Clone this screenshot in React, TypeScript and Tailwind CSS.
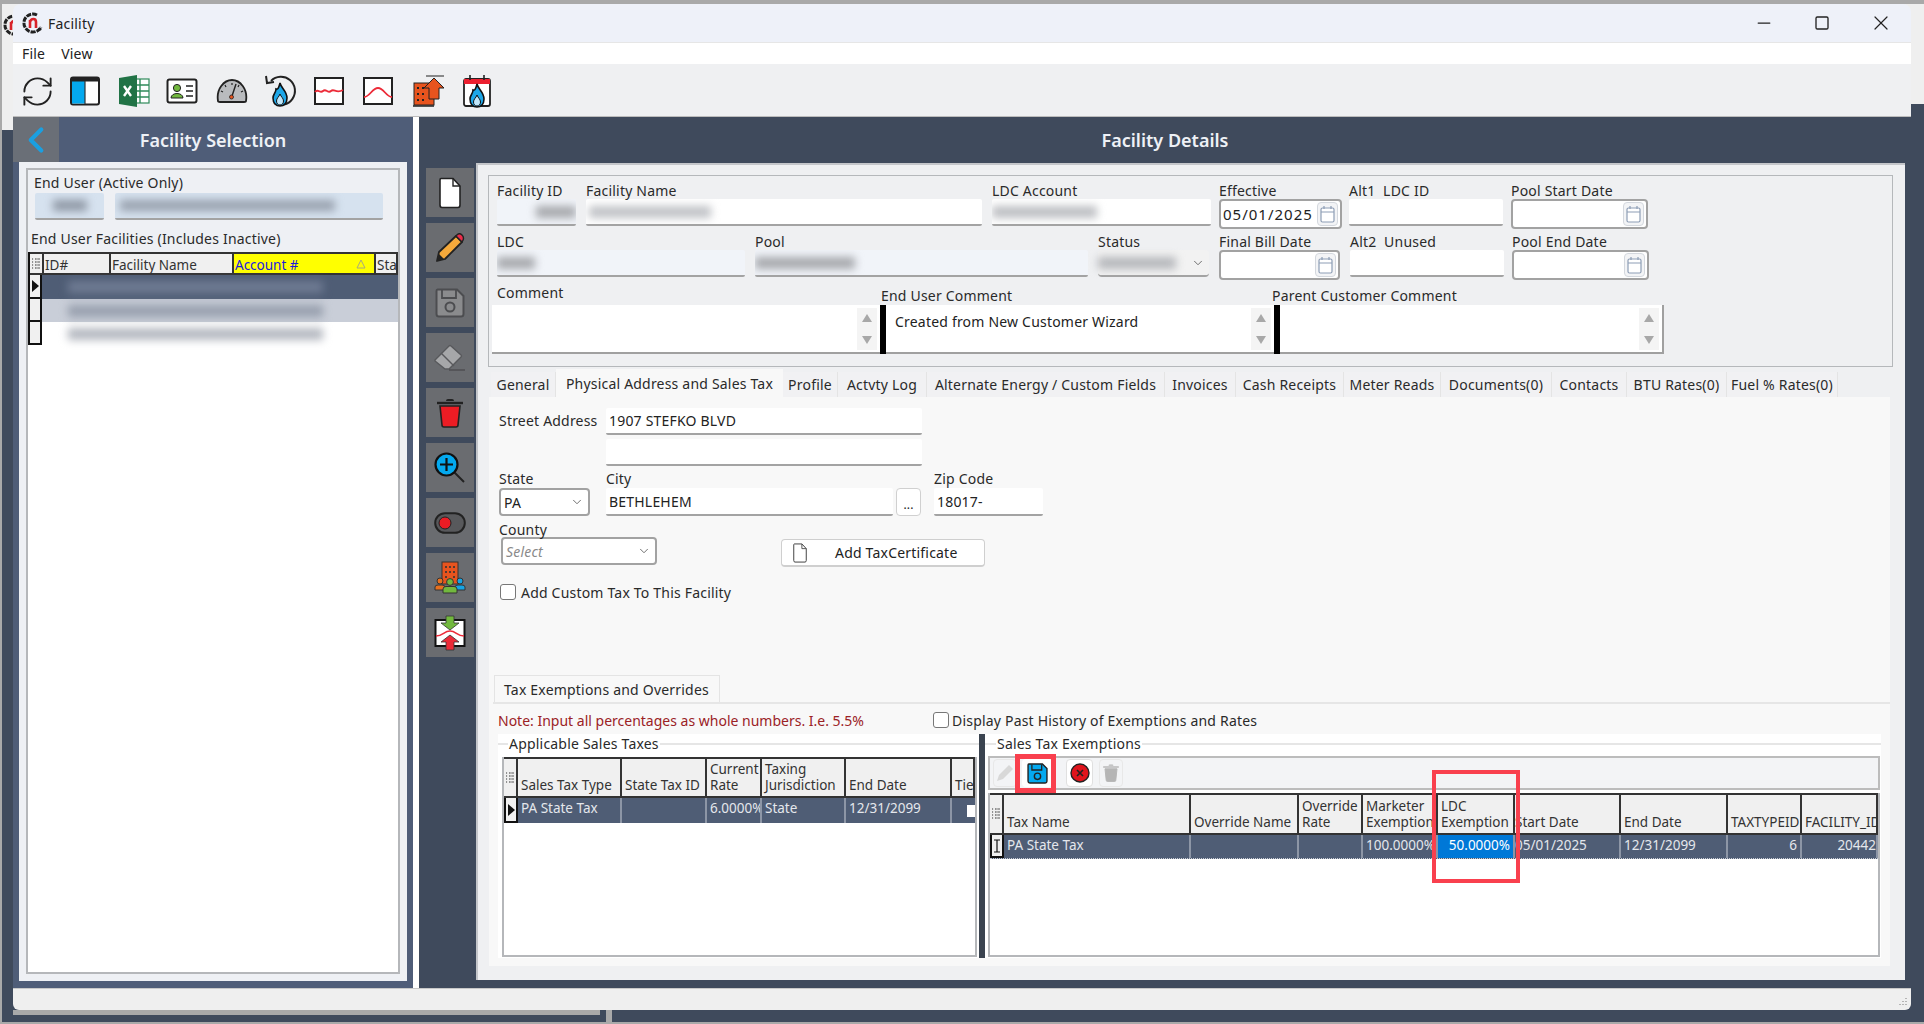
import { ReactNode } from "react";
import { RefreshCw, ChevronDown, ChevronLeft, Minus, Square, X } from "lucide-react";

// ---- small drawings ----

const Flame = ({ x = 0, y = 0 }: { x?: number; y?: number }) => (
  <g transform={`translate(${x} ${y})`}>
    <path d="M10 1 C11 6 17 9 17 16 C17 21 14 24 10 24 C6 24 3 21 3 16 C3 12 6 11 6 7 C8 8 9 5 10 1Z" fill="#1ea7e8" stroke="#111" strokeWidth="1.6" />
    <path d="M10 12 C11 15 13.5 16 13.5 19 C13.5 21.5 12 23 10 23 C8 23 6.5 21.5 6.5 19 C6.5 16 9 15 10 12Z" fill="#bfe6fa" stroke="#111" strokeWidth="1" />
  </g>
);

const Logo = () => (
  <svg width="22" height="22" viewBox="0 0 22 22">
    <path d="M15 3 A9 9 0 1 0 19 15" fill="none" stroke="#222" strokeWidth="3" strokeDasharray="5 1" />
    <path d="M8 16 V8 M8 10 C9 6 14 6 14 10 V16" fill="none" stroke="#d8232a" strokeWidth="2.6" />
    <circle cx="18" cy="17" r="1.5" fill="#222" />
  </svg>
);

const PanelIcon = () => (
  <svg width="32" height="32" viewBox="0 0 32 32">
    <rect x="2" y="2.5" width="28" height="27" rx="2" fill="#fff" stroke="#222" strokeWidth="2" />
    <rect x="3" y="6" width="13" height="22.5" fill="#04a9ef" />
    <rect x="2" y="2.5" width="28" height="4" fill="#222" />
    <path d="M16 6 V29" stroke="#333" strokeWidth="1.2" />
  </svg>
);

const ExcelIcon = () => (
  <svg width="32" height="34" viewBox="0 0 32 34">
    <rect x="15" y="5" width="16" height="24" fill="#fff" stroke="#2f8a5a" strokeWidth="1.2" />
    <path d="M15 11 H31 M15 17 H31 M15 23 H31 M22 5 V29" stroke="#2f8a5a" strokeWidth="1.4" />
    <path d="M1 4 L19 1 V33 L1 30Z" fill="#217346" />
    <path d="M6 12 L13 22 M13 12 L6 22" stroke="#fff" strokeWidth="2.4" />
  </svg>
);

const IdCardIcon = () => (
  <svg width="32" height="30" viewBox="0 0 32 30">
    <rect x="1.5" y="3.5" width="29" height="23" rx="2" fill="#fff" stroke="#222" strokeWidth="2" />
    <circle cx="11" cy="12" r="3.6" fill="#72b83e" stroke="#222" />
    <path d="M5 22 C5 16 17 16 17 22Z" fill="#72b83e" stroke="#222" />
    <path d="M20 10 H27 M20 15 H27 M20 20 H27" stroke="#222" strokeWidth="1.6" />
  </svg>
);

const GaugeIcon = () => (
  <svg width="32" height="30" viewBox="0 0 32 30">
    <path d="M2 25 C0 13 8 4 16 4 C24 4 32 13 30 25 Q30 26 28 26 H4 Q2 26 2 25Z" fill="#b9bbbe" stroke="#222" strokeWidth="1.8" />
    <path d="M16 7 V9 M9 9 L10 11 M23 9 L22 11 M5 15 L7 16 M27 15 L25 16" stroke="#222" strokeWidth="1.2" />
    <path d="M20 8 L16 20" stroke="#222" strokeWidth="1.4" />
    <circle cx="15.5" cy="21" r="2" fill="#e8541e" stroke="#222" strokeWidth=".8" />
  </svg>
);

const FlameHistoryIcon = () => (
  <svg width="32" height="34" viewBox="0 0 32 34">
    <path d="M6 7 A14 14 0 1 1 9 29" fill="none" stroke="#222" strokeWidth="2" />
    <path d="M1 2 L2 9 L9 8" fill="none" stroke="#222" strokeWidth="2" />
    <Flame x={5} y={8} />
  </svg>
);

const WaveIcon = ({ d }: { d: string }) => (
  <svg width="32" height="32" viewBox="0 0 32 32">
    <rect x="2" y="3" width="28" height="26" fill="#fff" stroke="#222" strokeWidth="2" />
    <path d={d} fill="none" stroke="#ec2b38" strokeWidth="1.8" />
  </svg>
);

const BuildingUpIcon = () => (
  <svg width="34" height="34" viewBox="0 0 34 34">
    <path d="M14 2 H32" stroke="#222" strokeWidth="1.2" />
    <rect x="2" y="9" width="20" height="22" fill="#e8541e" stroke="#222" />
    <path d="M1 32 H22" stroke="#222" strokeWidth="1.6" />
    <path d="M6 13 V15 M11 13 V15 M6 19 V21 M11 19 V21 M6 25 V27 M11 25 V27" stroke="#222" strokeWidth="2" />
    <path d="M22 4 L32 14 H27 V25 H17 V14 H12Z" fill="#e8541e" stroke="#222" />
  </svg>
);

const CalendarFlameIcon = () => (
  <svg width="30" height="34" viewBox="0 0 30 34">
    <rect x="2" y="5" width="26" height="27" rx="2" fill="#fff" stroke="#222" strokeWidth="1.8" />
    <rect x="2" y="5" width="26" height="5" fill="#ec2030" />
    <path d="M8 1 V6 M22 1 V6" stroke="#222" strokeWidth="1.6" />
    <Flame x={5} y={9} />
  </svg>
);

const DocIcon = ({ w = 24, h = 32, line = "#222" }: { w?: number; h?: number; line?: string }) => (
  <svg width={w} height={h} viewBox="0 0 24 32">
    <path d="M3 1.5 H15 L22 9 V28 Q22 30.5 20 30.5 H4 Q2 30.5 2 28 V3 Q2 1.5 3 1.5Z" fill="#fff" stroke={line} strokeWidth="1.6" />
    <path d="M15 1.5 V9 H22" fill="none" stroke={line} strokeWidth="1.4" />
  </svg>
);

const PencilIcon = () => (
  <svg width="32" height="32" viewBox="0 0 32 32">
    <path d="M3 29 L5 20 L22 4 L28 10 L11 27Z" fill="#f5a93b" stroke="#222" strokeWidth="1.8" strokeLinejoin="round" />
    <path d="M3 29 L5 22 L10 27Z" fill="#222" />
    <path d="M22 4 Q25 0 28 3 Q31 6 28 10Z" fill="#ec2b4a" stroke="#222" strokeWidth="1.4" />
  </svg>
);

const FloppyIcon = ({ fill = "#8a8b8d", line = "#4c4d50", width = 30 }: { fill?: string; line?: string; width?: number }) => (
  <svg width={width} height={width} viewBox="0 0 30 30">
    <path d="M2.5 1.5 H22 L28.5 8 V26 Q28.5 28.5 26 28.5 H4 Q1.5 28.5 1.5 26 V3 Q1.5 1.5 2.5 1.5Z" fill={fill} stroke={line} strokeWidth="2" />
    <path d="M7 2 V10 H21 V2" fill="none" stroke={line} strokeWidth="1.8" />
    <circle cx="15" cy="19" r="4.5" fill="none" stroke={line} strokeWidth="2" />
  </svg>
);

const EraserIcon = () => (
  <svg width="32" height="28" viewBox="0 0 32 28">
    <path d="M1 16 L15 2 Q16 1 17 2 L27 11 Q28 12 27 13 L15 25 H11 L1 17Z" fill="#a6a7a9" stroke="#58595c" strokeWidth="1.4" />
    <path d="M7 9 L20 22" stroke="#58595c" strokeWidth="1.4" />
    <path d="M15 26 H31" stroke="#4c4d50" strokeWidth="1.4" />
  </svg>
);

const TrashIcon = ({ body = "#ec1c24", line = "#222", size = 30 }: { body?: string; line?: string; size?: number }) => (
  <svg width={size} height={size} viewBox="0 0 30 30">
    <path d="M2 5 H28" stroke={line} strokeWidth="2.4" />
    <path d="M11 3 Q11 1 13 1 H17 Q19 1 19 3" fill={line} />
    <path d="M5 8 L7 27 Q7 29 9 29 H21 Q23 29 23 27 L25 8Z" fill={body} stroke={line} strokeWidth="1.6" />
  </svg>
);

const ZoomIcon = () => (
  <svg width="32" height="32" viewBox="0 0 32 32">
    <path d="M20 20 L30 30" stroke="#222" strokeWidth="2" />
    <circle cx="12.5" cy="12.5" r="11" fill="#04a9ef" stroke="#111" strokeWidth="2.2" />
    <path d="M12.5 6 V19 M6 12.5 H19" stroke="#111" strokeWidth="2.2" />
  </svg>
);

const ToggleIcon = () => (
  <svg width="32" height="22" viewBox="0 0 32 22">
    <rect x="1.2" y="1.2" width="29.6" height="19.6" rx="9.8" fill="#58595c" stroke="#222" strokeWidth="2" />
    <circle cx="11" cy="11" r="6" fill="#ec1c24" stroke="#222" strokeWidth="1" />
  </svg>
);

const BuildingPeopleIcon = () => (
  <svg width="32" height="34" viewBox="0 0 32 34">
    <rect x="8" y="1" width="16" height="22" fill="#e8541e" stroke="#333" />
    <path d="M12 5 V7 M16 5 V7 M20 5 V7 M12 10 V12 M16 10 V12 M20 10 V12 M12 15 V17 M20 15 V17" stroke="#333" strokeWidth="1.6" />
    <circle cx="6" cy="20" r="3" fill="#e8701e" stroke="#333" />
    <path d="M1 29 V26 Q1 24 4 24 H8 Q11 24 11 26 V29Z" fill="#e8701e" stroke="#333" />
    <circle cx="26" cy="20" r="3" fill="#17a4e4" stroke="#333" />
    <path d="M21 29 V26 Q21 24 24 24 H28 Q31 24 31 26 V29Z" fill="#17a4e4" stroke="#333" />
    <circle cx="16" cy="21" r="3.4" fill="#72b83e" stroke="#333" />
    <path d="M9 32 V28 Q9 25.5 12 25.5 H20 Q23 25.5 23 28 V32Z" fill="#72b83e" stroke="#333" />
  </svg>
);

const MeterArrowsIcon = () => (
  <svg width="32" height="36" viewBox="0 0 32 36">
    <rect x="1.5" y="5" width="29" height="26" fill="#fff" stroke="#111" strokeWidth="2" />
    <path d="M2 21 C9 21 10 16 16 16 C22 16 23 21 30 21" fill="none" stroke="#ec2b38" strokeWidth="1.6" />
    <path d="M12 1 H20 V8 H25 L16 15 L7 8 H12Z" fill="#72b83e" stroke="#333" strokeWidth=".8" />
    <path d="M16 20 L25 27 H20 V35 H12 V27 H7Z" fill="#ec2b38" stroke="#333" strokeWidth=".8" />
  </svg>
);

const CancelIcon = () => (
  <svg width="20" height="20" viewBox="0 0 20 20">
    <circle cx="10" cy="10" r="9" fill="#e0141c" stroke="#222" strokeWidth="1.4" />
    <path d="M7 7 L13 13 M13 7 L7 13" stroke="#222" strokeWidth="1.6" />
  </svg>
);

const ColumnsGlyph = () => (
  <svg width="8" height="12" viewBox="0 0 8 12" className="self-center mx-auto">
    <path d="M0 1 H1.5 M3 1 H8 M0 4 H1.5 M3 4 H8 M0 7 H1.5 M3 7 H8 M0 10 H1.5 M3 10 H8" stroke="#333" strokeWidth="1.2" strokeDasharray="1 .4" />
  </svg>
);

const RowArrow = () => (
  <svg width="7" height="12" viewBox="0 0 7 12" className="m-auto">
    <path d="M0 0 L7 6 L0 12Z" fill="#111" />
  </svg>
);

const CalendarGlyph = () => (
  <div className="flex h-[24px] w-[21px] items-center justify-center rounded-[4px] border border-[#d4d8de] bg-[#f3f4f6]">
    <svg width="15" height="18" viewBox="0 0 15 18">
      <rect x="1" y="3" width="13" height="14" rx="1.5" fill="#fff" stroke="#8d9db5" strokeWidth="1.2" />
      <path d="M1 7 H14 M4 1 V4 M11 1 V4" stroke="#8d9db5" strokeWidth="1.2" />
    </svg>
  </div>
);

// ---- form pieces ----

const Label = ({ children, className = "", size = "h-[17px] leading-[17px]" }: { children: ReactNode; className?: string; size?: string }) => (
  <div className={`whitespace-nowrap text-[14px] text-[#2a2a2a] ${size} ${className}`}>{children}</div>
);

const Smudge = ({ className }: { className: string }) => <div className={`blur-[4px] ${className}`} />;

const TextBox = ({ className = "", fill = "bg-white", size = "h-[27px]", children }: { className?: string; fill?: string; size?: string; children?: ReactNode }) => (
  <div className={`flex items-center overflow-hidden rounded-[2px] border-b-2 border-[#a3a3a3] text-[14px] text-[#222] ${size} ${fill} ${className}`}>
    {children}
  </div>
);

const DateBox = ({ value }: { value?: string }) => (
  <div className="flex h-[30px] items-center justify-between rounded-[4px] border-2 border-[#a2a2a2] bg-white pl-[2px] pr-[2px] text-[15px] tracking-[1px] text-[#222]">
    <span>{value}</span>
    <CalendarGlyph />
  </div>
);

const SelectBox = ({ children, className = "" }: { children: ReactNode; className?: string }) => (
  <div className={`flex items-center justify-between rounded-[4px] pr-[4px] text-[14px] ${className}`}>
    {children}
    <ChevronDown size={14} color="#666" strokeWidth={1.6} />
  </div>
);

const ScrollStub = () => (
  <div className="flex w-[20px] flex-col items-center justify-center gap-[14px] bg-[#f4f4f4] self-center h-[42px]">
    <svg width="10" height="8" viewBox="0 0 10 8"><path d="M5 0 L10 8 H0Z" fill="#a8a8a8" /></svg>
    <svg width="10" height="8" viewBox="0 0 10 8"><path d="M5 8 L10 0 H0Z" fill="#a8a8a8" /></svg>
  </div>
);

const CommentBox = ({ text, splitter, className = "" }: { text?: string; splitter?: boolean; className?: string }) => (
  <div className="flex h-[49px]">
    {splitter && <div className="w-[6px] bg-black" />}
    <div className={`flex flex-1 justify-between border-b-2 border-[#a0a0a0] bg-white pr-[3px] ${className}`}>
      <span className="pl-[9px] pt-[8px] text-[14px] leading-[18px] text-[#222]">{text}</span>
      <ScrollStub />
    </div>
  </div>
);

const SideButton = ({ children }: { children: ReactNode }) => (
  <div className="flex h-[49px] w-[48px] items-center justify-center bg-[#6a6c70]">{children}</div>
);

const HeadCell = ({ children, className = "", align = "items-end pb-[3px]", fill = "bg-[#f0f0f0] text-[#333]" }: { children?: ReactNode; className?: string; align?: string; fill?: string }) => (
  <div className={`flex overflow-hidden whitespace-pre border-y-2 border-r-2 border-[#333] text-[13.5px] leading-[16px] tracking-normal ${align} ${fill} ${className}`}>
    {children}
  </div>
);

const RowCell = ({ children, className = "" }: { children?: ReactNode; className?: string }) => (
  <div className={`overflow-hidden whitespace-nowrap border-r-2 border-[#8d96a6] text-[13.5px] leading-[20px] tracking-normal ${className}`}>
    {children}
  </div>
);

const topTabs = [
  { label: "General", w: "w-[65px]" },
  { label: "Physical Address and Sales Tax", w: "w-[227px]", active: true },
  { label: "Profile", w: "w-[55px]" },
  { label: "Actvty Log", w: "w-[89px]" },
  { label: "Alternate Energy / Custom Fields", w: "w-[238px]" },
  { label: "Invoices", w: "w-[71px]" },
  { label: "Cash Receipts", w: "w-[108px]" },
  { label: "Meter Reads", w: "w-[97px]" },
  { label: "Documents(0)", w: "w-[111px]" },
  { label: "Contacts", w: "w-[75px]" },
  { label: "BTU Rates(0)", w: "w-[100px]" },
  { label: "Fuel % Rates(0)", w: "w-[111px]" },
];

const rowText = "px-[3px] text-[#e4e7ec]";
const headCenter = "items-center pt-[2px]";

export default function App() {
  return (
    <div className="relative h-[1024px] w-[1924px] overflow-hidden bg-[#a9a9a9] font-['Noto_Sans',sans-serif] tracking-[0.2px]">
      {/* windows behind the active one */}
      <div className="absolute left-[2px] top-[4px] h-[1018px] w-[604px] bg-[#3f4a5c]">
        <div className="h-[126px] bg-[#efefef] pl-[1px] pt-[10px]">
          <Logo />
        </div>
      </div>
      <div className="absolute left-[612px] top-[4px] h-[1018px] w-[1312px] bg-[#2c3442]">
        <div className="h-[100px] bg-[#efefef]" />
        <div className="h-[918px] bg-[#3f4a5c]" />
      </div>
      <div className="absolute left-[13px] top-[1010px] h-[5px] w-[587px] bg-[#a9a9a9]" />

      {/* active window */}
      <div className="absolute left-[13px] top-[4px] flex h-[1006px] w-[1898px] flex-col overflow-hidden rounded-t-[8px] rounded-b-[6px]">
        <div className="flex h-[38px] items-center justify-between bg-[#eef1f9] pl-[9px]">
          <div className="flex items-center gap-[4px]">
            <Logo />
            <span className="text-[14px] text-[#222]">Facility</span>
          </div>
          <div className="flex items-center">
            <div className="flex w-[58px] justify-center"><Minus size={20} strokeWidth={1.5} color="#222" /></div>
            <div className="flex w-[58px] justify-center"><Square size={16} strokeWidth={2} color="#222" /></div>
            <div className="flex w-[60px] justify-center"><X size={24} strokeWidth={1.2} color="#222" /></div>
          </div>
        </div>

        <div className="flex h-[22px] items-center gap-[16px] border-t border-[#e6e6e6] bg-white pl-[9px] text-[14px] text-[#222]">
          <span>File</span>
          <span>View</span>
        </div>

        <div className="flex h-[52px] items-center bg-[#eff0f2] pl-[7px] pt-[2px]">
          <div className="flex w-[49px] justify-start"><RefreshCw size={35} strokeWidth={1.3} color="#222" /></div>
          <div className="flex w-[49px] justify-start"><PanelIcon /></div>
          <div className="flex w-[48px] justify-start"><ExcelIcon /></div>
          <div className="flex w-[50px] justify-start"><IdCardIcon /></div>
          <div className="flex w-[49px] justify-start"><GaugeIcon /></div>
          <div className="flex w-[48px] justify-start"><FlameHistoryIcon /></div>
          <div className="flex w-[49px] justify-start"><WaveIcon d="M2 17 C5 13 7 19 10 16 C13 13 15 19 18 16 C21 13 23 19 30 15" /></div>
          <div className="flex w-[50px] justify-start"><WaveIcon d="M2 22 C8 22 10 13 16 13 C22 13 24 22 30 22" /></div>
          <div className="flex w-[50px] justify-start"><BuildingUpIcon /></div>
          <div className="flex w-[30px] justify-start"><CalendarFlameIcon /></div>
        </div>

        <div className="flex min-h-0 flex-1 border-t border-[#bcbcbc]">
          {/* facility selection */}
          <div className="flex w-[400px] flex-col bg-[#4f5d78]">
            <div className="flex h-[45px] items-center">
              <div className="flex h-full w-[46px] items-center justify-center bg-[#6a6f77]">
                <ChevronLeft size={42} strokeWidth={2.4} color="#1b9fe0" />
              </div>
              <div className="flex-1 pr-[46px] pt-[1px] text-center text-[18px] font-semibold tracking-normal text-[#eef1f6]">Facility Selection</div>
            </div>
            <div className="mx-[6px] h-[819px] bg-[#eef0f4] px-[7px] pt-[6px]">
              <div className="h-[84px] border-2 border-b-0 border-[#b5b7ba] pl-[6px] pt-[4px]">
                <Label>End User (Active Only)</Label>
                <div className="mt-[2px] flex gap-[11px] pl-[1px]">
                  <TextBox fill="bg-[#d6e2ef]" className="w-[69px] justify-center"><Smudge className="h-[11px] w-[34px] bg-[#8e97a4]" /></TextBox>
                  <TextBox fill="bg-[#d6e2ef]" className="w-[268px] pl-[5px]"><Smudge className="h-[11px] w-[215px] bg-[#98a1ae]" /></TextBox>
                </div>
                <Label className="-ml-[3px] mt-[10px]">End User Facilities (Includes Inactive)</Label>
              </div>
              <div className="h-[722px] border-2 border-t-0 border-[#b5b7ba] bg-white">
                <div className="grid h-[23px] grid-cols-[14px_67px_123px_142px_1fr] border-l-2 border-[#111]">
                  <HeadCell align="items-center"><ColumnsGlyph /></HeadCell>
                  <HeadCell align={headCenter} className="pl-[1px]">ID#</HeadCell>
                  <HeadCell align={headCenter} className="pl-[1px]">Facility Name</HeadCell>
                  <HeadCell align={headCenter} fill="bg-[#ffff00] text-[#1a1ae0]" className="justify-between pl-[1px]">
                    Account #
                    <svg width="10" height="10" viewBox="0 0 10 10" className="mb-[2px] mr-[8px]"><path d="M5 1 L9 9 H1Z" fill="none" stroke="#a8a880" /></svg>
                  </HeadCell>
                  <HeadCell align={headCenter} className="pl-[1px]">Sta</HeadCell>
                </div>
                <div className="grid h-[24px] grid-cols-[14px_1fr]">
                  <div className="flex border-2 border-t-0 border-[#111] bg-[#f0f0f0]"><RowArrow /></div>
                  <div className="flex items-center bg-[#4f5d75] pl-[26px]"><Smudge className="h-[12px] w-[255px] bg-[#6f7b93]" /></div>
                </div>
                <div className="grid h-[23px] grid-cols-[14px_1fr]">
                  <div className="border-2 border-t-0 border-[#111] bg-[#f0f0f0]" />
                  <div className="flex items-center bg-[#c9ced8] pl-[26px]"><Smudge className="h-[12px] w-[255px] bg-[#98a0ae]" /></div>
                </div>
                <div className="grid h-[23px] grid-cols-[14px_1fr]">
                  <div className="border-2 border-t-0 border-[#111] bg-[#f0f0f0]" />
                  <div className="flex items-center bg-white pl-[26px]"><Smudge className="h-[12px] w-[255px] bg-[#b4b8c0]" /></div>
                </div>
              </div>
            </div>
          </div>

          <div className="w-[6px] bg-white" />

          {/* facility details */}
          <div className="flex flex-1 flex-col bg-[#3f4a5c]">
            <div className="flex h-[46px] items-center justify-center text-[18px] font-semibold tracking-normal text-[#eef1f6]">Facility Details</div>
            <div className="flex flex-1">
              <div className="flex w-[57px] flex-col gap-[6px] pl-[7px] pt-[5px]">
                <SideButton><DocIcon /></SideButton>
                <SideButton><PencilIcon /></SideButton>
                <SideButton><FloppyIcon /></SideButton>
                <SideButton><EraserIcon /></SideButton>
                <SideButton><TrashIcon /></SideButton>
                <SideButton><ZoomIcon /></SideButton>
                <SideButton><ToggleIcon /></SideButton>
                <SideButton><BuildingPeopleIcon /></SideButton>
                <SideButton><MeterArrowsIcon /></SideButton>
              </div>

              <div className="h-[817px] w-[1429px] border-l-2 border-t-2 border-[#c4c6ca] bg-[#eff0f2] pl-[10px] pr-[12px] pt-[10px]">
                {/* header fields */}
                <div className="h-[192px] w-[1405px] border border-[#b5b8bb] pt-[6px]">
                  <div className="flex h-[46px] pl-[8px]">
                    <div className="w-[79px]"><Label>Facility ID</Label><TextBox fill="bg-[#f1f4f9]" className="justify-end"><Smudge className="h-[12px] w-[40px] bg-[#a6a8ac]" /></TextBox></div>
                    <div className="ml-[10px] w-[396px]"><Label>Facility Name</Label><TextBox className="pl-[3px]"><Smudge className="h-[12px] w-[122px] bg-[#c0c2c6]" /></TextBox></div>
                    <div className="ml-[10px] w-[219px]"><Label>LDC Account</Label><TextBox><Smudge className="h-[12px] w-[105px] bg-[#bcbec2]" /></TextBox></div>
                    <div className="ml-[8px] w-[123px]"><Label>Effective</Label><DateBox value="05/01/2025" /></div>
                    <div className="ml-[7px] w-[154px]"><Label>Alt1&nbsp; LDC ID</Label><TextBox /></div>
                    <div className="ml-[8px] w-[137px]"><Label>Pool Start Date</Label><DateBox /></div>
                  </div>
                  <div className="mt-[5px] flex h-[46px] pl-[8px]">
                    <div className="w-[248px]"><Label>LDC</Label><TextBox fill="bg-[#f1f4f9]"><Smudge className="h-[12px] w-[38px] bg-[#a6a8ac]" /></TextBox></div>
                    <div className="ml-[10px] w-[333px]"><Label>Pool</Label><TextBox fill="bg-[#f1f4f9]"><Smudge className="h-[12px] w-[100px] bg-[#a6a8ac]" /></TextBox></div>
                    <div className="ml-[10px] w-[111px]"><Label>Status</Label><SelectBox className="h-[27px] border-b-2 border-[#a3a3a3] bg-[#f2f2f2]"><Smudge className="h-[12px] w-[78px] bg-[#b5b7bb]" /></SelectBox></div>
                    <div className="ml-[10px] w-[121px]"><Label>Final Bill Date</Label><DateBox /></div>
                    <div className="ml-[10px] w-[154px]"><Label>Alt2&nbsp; Unused</Label><TextBox /></div>
                    <div className="ml-[8px] w-[137px]"><Label>Pool End Date</Label><DateBox /></div>
                  </div>
                  <div className="mt-[9px] flex pl-[3px]">
                    <div className="w-[388px]">
                      <Label size="h-[17px] leading-[15px]" className="-mt-[3px] mb-[3px] pl-[5px]">Comment</Label>
                      <CommentBox />
                    </div>
                    <div className="w-[394px]">
                      <Label size="h-[17px] leading-[15px]" className="pl-[1px]">End User Comment</Label>
                      <CommentBox splitter text="Created from New Customer Wizard" />
                    </div>
                    <div className="w-[390px]">
                      <Label size="h-[17px] leading-[15px]" className="-ml-[2px]">Parent Customer Comment</Label>
                      <CommentBox splitter className="border-r-2" />
                    </div>
                  </div>
                </div>

                {/* tab strip */}
                <div className="mt-[2px] flex h-[28px] items-end pl-[3px]">
                  {topTabs.map((tab) =>
                    tab.active ? (
                      <div key={tab.label} className={`flex h-[28px] ${tab.w} items-start justify-center whitespace-nowrap bg-[#f8f8f8] pt-[4px] text-[14px] text-[#2a2a2a]`}>{tab.label}</div>
                    ) : (
                      <div key={tab.label} className={`flex h-[25px] ${tab.w} items-center justify-center whitespace-nowrap border-r border-[#e4e4e4] bg-[#f1f1f3] text-[14px] text-[#2a2a2a]`}>{tab.label}</div>
                    )
                  )}
                </div>

                {/* tab body */}
                <div className="ml-[1px] h-[569px] w-[1401px] bg-[#f8f8f8] pt-[11px]">
                  <div className="flex pl-[10px]">
                    <div className="w-[107px] pt-[4px] text-[14px] leading-[18px] text-[#2a2a2a]">Street Address</div>
                    <div className="flex w-[316px] flex-col gap-[4px]">
                      <TextBox className="pl-[3px]">1907 STEFKO BLVD</TextBox>
                      <TextBox />
                    </div>
                  </div>
                  <div className="mt-[6px] flex pl-[10px]">
                    <div className="w-[91px]"><Label size="h-[16px] leading-[14px]">State</Label><SelectBox className="h-[28px] border-2 border-[#a2a2a2] bg-white pl-[3px] text-[#222]">PA</SelectBox></div>
                    <div className="ml-[16px] w-[287px]"><Label size="h-[16px] leading-[14px]">City</Label><TextBox size="h-[28px]" className="pl-[3px]">BETHLEHEM</TextBox></div>
                    <div className="ml-[3px] mt-[16px] flex h-[28px] w-[25px] items-end justify-center rounded-[4px] border border-[#d0d0d0] bg-white text-[12px] leading-[20px] text-[#222]">...</div>
                    <div className="ml-[13px] w-[109px]"><Label size="h-[16px] leading-[14px]">Zip Code</Label><TextBox size="h-[28px]" className="pl-[3px]">18017-</TextBox></div>
                  </div>
                  <div className="mt-[6px] flex pl-[10px]">
                    <div className="w-[158px]">
                      <Label size="h-[15px] leading-[15px]">County</Label>
                      <SelectBox className="ml-[2px] h-[28px] w-[156px] border-2 border-[#a2a2a2] bg-white pl-[3px] italic text-[#8a8a8a]">Select</SelectBox>
                    </div>
                    <div className="ml-[124px] mt-[17px] flex h-[28px] w-[204px] items-center rounded-[4px] border border-b-2 border-[#cfcfcf] bg-white pl-[10px] text-[14px] text-[#222]">
                      <DocIcon w={16} h={20} line="#444" />
                      <span className="ml-[27px]">Add TaxCertificate</span>
                    </div>
                  </div>
                  <label className="ml-[11px] mt-[17px] flex h-[16px] items-center gap-[5px] text-[14px] text-[#2a2a2a]">
                    <span className="h-[16px] w-[16px] rounded-[3px] border border-[#777] bg-white" />
                    Add Custom Tax To This Facility
                  </label>

                  {/* tax exemptions */}
                  <div className="ml-[5px] mt-[75px] flex h-[27px] w-[226px] items-center whitespace-nowrap border border-b-0 border-[#e4e4e4] bg-[#f8f8f8] pl-[9px] text-[14px] text-[#2a2a2a]">
                    Tax Exemptions and Overrides
                  </div>
                  <div className="ml-[4px] h-[262px] border-t-2 border-[#e6e6e6]">
                    <div className="flex h-[30px] items-center pl-[5px] pt-[2px]">
                      <span className="w-[435px] text-[14px] tracking-normal text-[#9b2226]">Note: Input all percentages as whole numbers. I.e. 5.5%</span>
                      <span className="h-[16px] w-[16px] rounded-[3px] border border-[#777] bg-white" />
                      <span className="ml-[3px] text-[14px] text-[#2a2a2a]">Display Past History of Exemptions and Rates</span>
                    </div>
                    <div className="relative ml-[5px] mr-[9px] flex h-[224px] bg-white">
                      <div className="relative w-[481px] pl-[4px] pr-[2px] pt-[23px]">
                        <div className="absolute left-0 right-0 top-[9px] border-t-2 border-[#e6e6e6]" />
                        <div className="absolute left-[10px] top-[1px] bg-white px-[1px] text-[14px] leading-[18px] text-[#2a2a2a]">Applicable Sales Taxes</div>
                        <div className="h-[200px] border-2 border-t-0 border-[#b5b7ba]">
                          <div className="grid h-[41px] grid-cols-[14px_104px_85px_55px_84px_106px_1fr]">
                            <HeadCell align="items-center"><ColumnsGlyph /></HeadCell>
                            <HeadCell className="px-[3px]">Sales Tax Type</HeadCell>
                            <HeadCell className="px-[3px]">State Tax ID</HeadCell>
                            <HeadCell className="px-[3px]">{"Current\nRate"}</HeadCell>
                            <HeadCell className="px-[3px]">{"Taxing\nJurisdiction"}</HeadCell>
                            <HeadCell className="px-[3px]">End Date</HeadCell>
                            <HeadCell className="border-r-0 px-[3px]">Tier</HeadCell>
                          </div>
                          <div className="grid h-[25px] grid-cols-[14px_104px_85px_55px_84px_106px_1fr] bg-[#4f5d75]">
                            <div className="flex border-2 border-t-0 border-[#111] bg-[#f0f0f0]"><RowArrow /></div>
                            <RowCell className={rowText}>PA State Tax</RowCell>
                            <RowCell className={rowText} />
                            <RowCell className={rowText}>6.0000%</RowCell>
                            <RowCell className={rowText}>State</RowCell>
                            <RowCell className={rowText}>12/31/2099</RowCell>
                            <div className="flex items-center justify-end"><span className="h-[12px] w-[8px] bg-white" /></div>
                          </div>
                        </div>
                      </div>
                      <div className="w-[6px] bg-[#3a434f]" />
                      <div className="relative flex-1 pl-[3px] pr-[1px] pt-[22px]">
                        <div className="absolute left-0 right-0 top-[9px] border-t-2 border-[#e6e6e6]" />
                        <div className="absolute left-[11px] top-[1px] bg-white px-[1px] text-[14px] leading-[18px] text-[#2a2a2a]">Sales Tax Exemptions</div>
                        <div className="flex h-[34px] items-center border-2 border-[#bcbcbc] bg-[#f3f4f6] pl-[3px]">
                          <div className="flex h-[28px] w-[24px] items-center justify-center rounded-[4px] border border-[#e8e8e8]">
                            <svg width="18" height="18" viewBox="0 0 18 18"><path d="M1 17 L3 11 L13 1 L17 5 L7 15Z" fill="#d8d8d8" /></svg>
                          </div>
                          <div className="ml-[5px] flex h-[28px] w-[30px] items-center justify-center rounded-[4px] bg-white">
                            <FloppyIcon fill="#04a9ef" line="#222" width={21} />
                          </div>
                          <div className="ml-[14px] flex h-[28px] w-[27px] items-center justify-center rounded-[4px] border border-[#e0e0e0] bg-white"><CancelIcon /></div>
                          <div className="ml-[6px] flex h-[28px] w-[24px] items-center justify-center rounded-[4px] border border-[#e8e8e8]">
                            <TrashIcon body="#b5b5b5" line="#b5b5b5" size={18} />
                          </div>
                        </div>
                        <div className="mt-[3px] h-[164px] border-x-2 border-b-2 border-[#b5b7ba]">
                          <div className="grid h-[42px] grid-cols-[14px_187px_108px_64px_75px_77px_106px_107px_74px_1fr]">
                            <HeadCell align="items-center"><ColumnsGlyph /></HeadCell>
                            <HeadCell className="px-[3px]">Tax Name</HeadCell>
                            <HeadCell className="px-[3px]">Override Name</HeadCell>
                            <HeadCell className="px-[3px]">{"Override\nRate"}</HeadCell>
                            <HeadCell className="px-[3px]">{"Marketer\nExemption"}</HeadCell>
                            <HeadCell className="px-[3px]">{"LDC\nExemption"}</HeadCell>
                            <HeadCell className="pr-[3px]">Start Date</HeadCell>
                            <HeadCell className="px-[3px]">End Date</HeadCell>
                            <HeadCell className="pl-[3px]">TAXTYPEID</HeadCell>
                            <HeadCell className="border-r-0 pl-[3px]">FACILITY_ID</HeadCell>
                          </div>
                          <div className="grid h-[24px] grid-cols-[14px_187px_108px_64px_75px_77px_106px_107px_74px_1fr] border-b border-dotted border-[#c8ccd4] bg-[#4f5d75]">
                            <div className="flex items-center justify-center border-2 border-t-0 border-[#111] bg-[#f0f0f0] text-[14px] leading-none text-[#111]">
                              <svg width="8" height="14" viewBox="0 0 8 14"><path d="M1 1 H7 M1 13 H7 M4 1 V13" stroke="#111" strokeWidth="1.2" /></svg>
                            </div>
                            <RowCell className={rowText}>PA State Tax</RowCell>
                            <RowCell className={rowText} />
                            <RowCell className={rowText} />
                            <RowCell className={`${rowText} text-right`}>100.0000%</RowCell>
                            <RowCell className="bg-[#0078d7] px-[3px] text-right text-white">50.0000%</RowCell>
                            <RowCell className="pr-[3px] text-[#e4e7ec]">05/01/2025</RowCell>
                            <RowCell className={rowText}>12/31/2099</RowCell>
                            <RowCell className={`${rowText} text-right`}>6</RowCell>
                            <RowCell className="border-r-0 pl-[3px] text-right text-[#e4e7ec]">20442</RowCell>
                          </div>
                        </div>
                        {/* callouts drawn on the screenshot */}
                        <div className="absolute left-[30px] top-[20px] h-[39px] w-[41px] border-[5px] border-[#f9404e]" />
                        <div className="absolute left-[447px] top-[36px] h-[113px] w-[88px] border-[4px] border-[#f9404e]" />
                      </div>
                    </div>
                  </div>
                </div>
              </div>
            </div>
          </div>
        </div>

        <div className="relative h-[22px] border-t border-[#c8c8c8] bg-[#efefef]">
          <svg width="10" height="10" viewBox="0 0 10 10" className="absolute bottom-[3px] right-[3px]">
            <path d="M8 1 V2 M5 4 V5 M8 4 V5 M2 7 V8 M5 7 V8 M8 7 V8" stroke="#b4b4b4" strokeWidth="2" />
          </svg>
        </div>
      </div>
    </div>
  );
}
